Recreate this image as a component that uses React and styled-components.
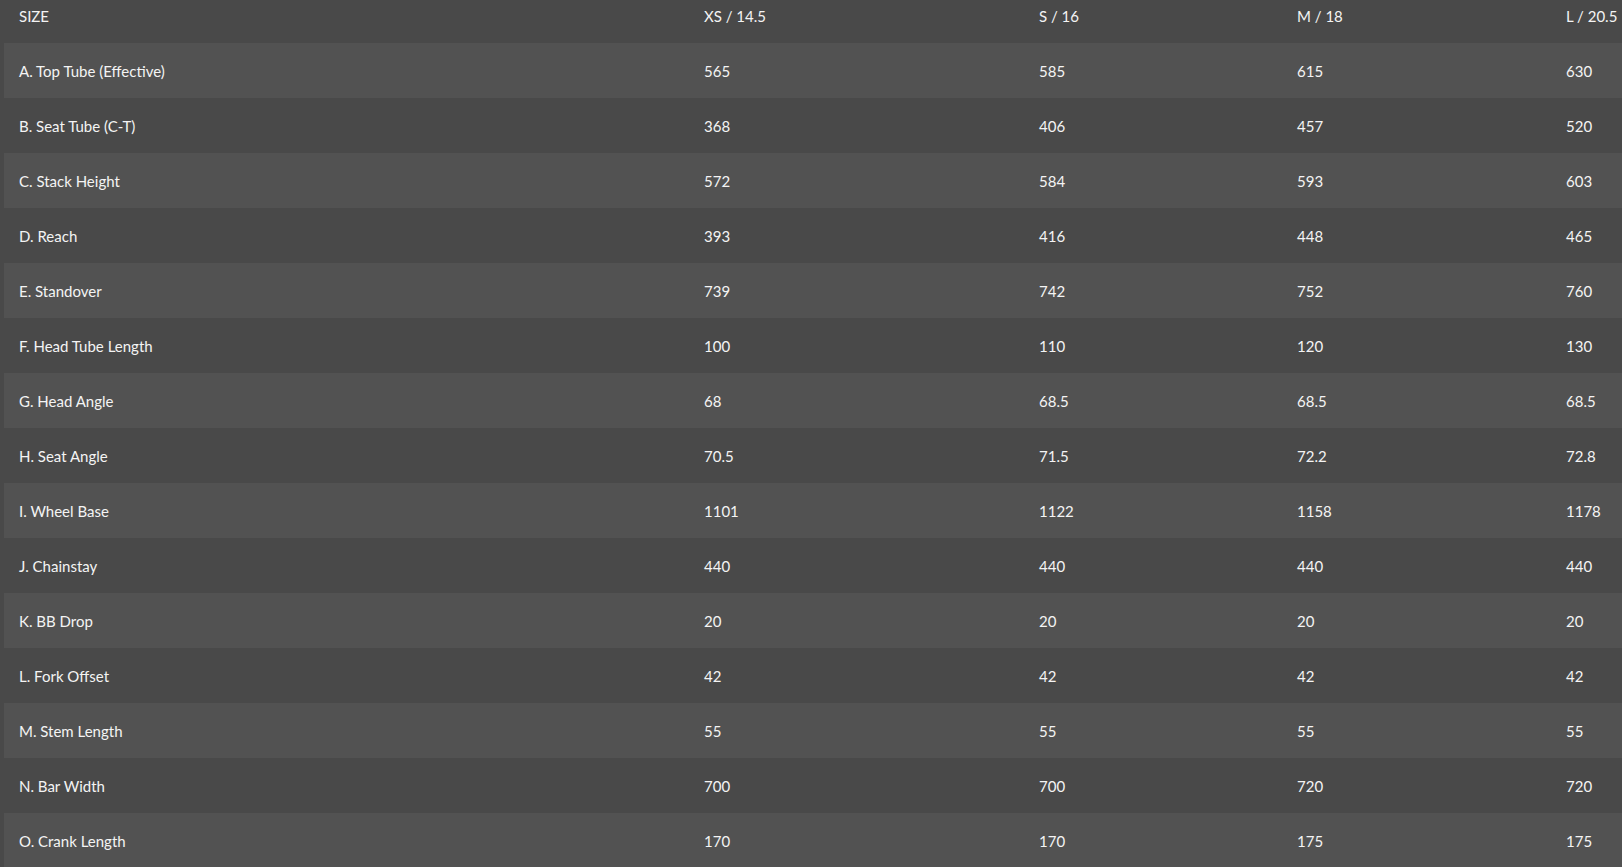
import React from "react";
import styled, { createGlobalStyle } from "styled-components";

const Global = createGlobalStyle`
  html, body { margin: 0; padding: 0; background: #494949; }
  body { font-family: "Lato", "Liberation Sans", sans-serif; overflow: hidden; }
`;

const Table = styled.div`
  display: grid;
  grid-template-columns: 689px 335px 258px 269px 71px;
  width: 1622px;
  color: #f4f4f4;
  font-size: 15px;
`;

const Row = styled.div`
  display: contents;
`;

const Cell = styled.div`
  height: ${(p) => (p.$head ? "43px" : "53px")};
  display: flex;
  align-items: ${(p) => (p.$head ? "flex-start" : "center")};
  padding: ${(p) => (p.$head ? "7px 0 0 15px" : "0 0 0 15px")};
  box-sizing: border-box;
  background: ${(p) => (p.$alt ? "#525252" : "transparent")};
  margin-left: ${(p) => (p.$first && !p.$head ? "4px" : "0")};
  white-space: nowrap;
`;

const DataCell = styled(Cell)`
  height: 55px;
`;

const FirstHead = styled(Cell)`
  padding-left: 19px;
`;

const sizes = ["XS / 14.5", "S / 16", "M / 18", "L / 20.5"];
const rows = [
  ["A. Top Tube (Effective)", "565", "585", "615", "630"],
  ["B. Seat Tube (C-T)", "368", "406", "457", "520"],
  ["C. Stack Height", "572", "584", "593", "603"],
  ["D. Reach", "393", "416", "448", "465"],
  ["E. Standover", "739", "742", "752", "760"],
  ["F. Head Tube Length", "100", "110", "120", "130"],
  ["G. Head Angle", "68", "68.5", "68.5", "68.5"],
  ["H. Seat Angle", "70.5", "71.5", "72.2", "72.8"],
  ["I. Wheel Base", "1101", "1122", "1158", "1178"],
  ["J. Chainstay", "440", "440", "440", "440"],
  ["K. BB Drop", "20", "20", "20", "20"],
  ["L. Fork Offset", "42", "42", "42", "42"],
  ["M. Stem Length", "55", "55", "55", "55"],
  ["N. Bar Width", "700", "700", "720", "720"],
  ["O. Crank Length", "170", "170", "175", "175"],
];

export default function App() {
  return (
    <>
      <Global />
      <Table>
        <Row>
          <FirstHead $head>SIZE</FirstHead>
          {sizes.map((s) => (
            <Cell $head key={s}>{s}</Cell>
          ))}
        </Row>
        {rows.map((r, i) => (
          <Row key={r[0]}>
            {r.map((c, j) => (
              <DataCell key={j} $alt={i % 2 === 0} $first={j === 0}>
                {c}
              </DataCell>
            ))}
          </Row>
        ))}
      </Table>
    </>
  );
}
